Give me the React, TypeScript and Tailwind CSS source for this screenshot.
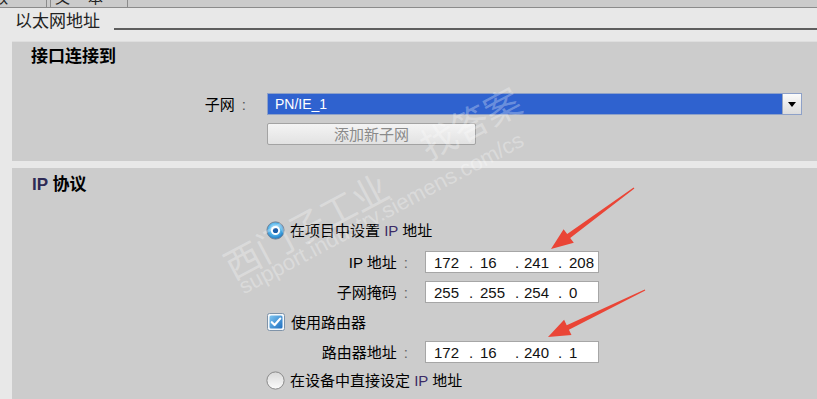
import React from "react";

type Octets = [string, string, string, string];

function RadioOn() {
  return (
    <svg width="19" height="19" viewBox="0 0 19 19" className="shrink-0">
      <defs>
        <radialGradient id="rOn" cx="45%" cy="40%" r="60%">
          <stop offset="0%" stopColor="#e6f6ff" />
          <stop offset="55%" stopColor="#5ab8ec" />
          <stop offset="100%" stopColor="#1c79c4" />
        </radialGradient>
      </defs>
      <circle cx="9.5" cy="9.5" r="8.6" fill="url(#rOn)" stroke="#6e8297" strokeWidth="1" />
      <circle cx="9.5" cy="9.5" r="4.6" fill="#ffffff" />
      <circle cx="9.5" cy="9.5" r="2.6" fill="#1a5ea9" />
    </svg>
  );
}

function RadioOff() {
  return (
    <svg width="19" height="19" viewBox="0 0 19 19" className="shrink-0">
      <defs>
        <linearGradient id="rOff" x1="0" y1="0" x2="0" y2="1">
          <stop offset="0%" stopColor="#d9d9d9" />
          <stop offset="100%" stopColor="#fbfbfb" />
        </linearGradient>
      </defs>
      <circle cx="9.5" cy="9.5" r="8.6" fill="url(#rOff)" stroke="#8a8a8a" strokeWidth="1" />
    </svg>
  );
}

function CheckOn() {
  return (
    <svg width="18" height="18" viewBox="0 0 18 18" className="shrink-0">
      <defs>
        <linearGradient id="cOn" x1="0" y1="0" x2="1" y2="1">
          <stop offset="0%" stopColor="#7cc4f0" />
          <stop offset="100%" stopColor="#1f6fc0" />
        </linearGradient>
      </defs>
      <rect x="0.5" y="0.5" width="17" height="17" rx="2" fill="#f4f8fb" stroke="#7f93a8" />
      <rect x="2.5" y="2.5" width="13" height="13" rx="1.5" fill="url(#cOn)" />
      <path d="M4.8 9.2 L7.6 12 L13.2 5.6" fill="none" stroke="#ffffff" strokeWidth="2.2" strokeLinecap="round" strokeLinejoin="round" />
    </svg>
  );
}

function IpField({ octets }: { octets: Octets }) {
  return (
    <div className="flex h-[22px] w-[174px] items-center border border-[#a6a6a6] bg-white pl-[8px] text-[15px] leading-none text-[#111]">
      <span className="w-[32px]">{octets[0]}</span>
      <span className="w-[14px] pl-[3px]">.</span>
      <span className="w-[32px]">{octets[1]}</span>
      <span className="w-[12px] pl-[3px]">.</span>
      <span className="w-[30px]">{octets[2]}</span>
      <span className="w-[15px] pl-[4px]">.</span>
      <span>{octets[3]}</span>
    </div>
  );
}

function FieldRow({ label, octets, className }: { label: React.ReactNode; octets: Octets; className: string }) {
  return (
    <div className={"flex h-[22px] items-center " + className}>
      <div className="flex w-[413px] items-center justify-end pr-[17px] text-[15px] leading-none">
        <span>{label}</span>
        <span className="ml-[7px] text-[#666]">:</span>
      </div>
      <IpField octets={octets} />
    </div>
  );
}

const Ip = () => <span className="text-[#3a2a66]">IP</span>;

export default function App() {
  return (
    <div className="relative h-[399px] w-[817px] overflow-hidden bg-[#e8e8e8] font-['Liberation_Sans','Noto_Sans_CJK_SC',sans-serif] text-black">
      {/* tab strip */}
      <div className="flex h-[8px] overflow-hidden border-b border-[#8b8b8b] bg-[#cbcbcb] text-[15px] leading-none text-[#222]">
        <div className="w-[47px] overflow-hidden border-r border-[#8b8b8b]">
          <span className="-ml-[7px] -mt-[10px] block">数</span>
        </div>
        <div className="ml-[3px] flex w-[78px] gap-[18px] overflow-hidden border-l border-r border-[#8b8b8b] pl-[4px]">
          <span className="-mt-[10px] block">文</span>
          <span className="-mt-[10px] block">本</span>
        </div>
      </div>

      {/* header */}
      <div className="flex h-[22px] items-end pl-[15px]">
        <span className="text-[17px] leading-none text-[#222]">以太网地址</span>
        <div className="ml-[14px] h-[2px] flex-1 bg-[#5e5e5e]" />
      </div>

      {/* 接口连接到 */}
      <div className="ml-[12px] mt-[11px] h-[120px] border-t border-[#dedede] bg-[#cccccc]">
        <div className="h-[51px] pl-[19px] pt-[6px] text-[17px] font-bold leading-none">接口连接到</div>
        <div className="flex h-[22px] items-center">
          <div className="flex w-[255px] items-center justify-end pr-[21px] text-[15px] leading-none">
            <span>子网</span>
            <span className="ml-[7px] text-[#555]">:</span>
          </div>
          <div className="flex h-[22px] w-[535px] items-stretch border border-[#8ea1c8] bg-[#2f62cf]">
            <span className="flex-1 self-center pl-[7px] text-[14px] leading-none text-white">PN/IE_1</span>
            <div className="flex w-[19px] items-center justify-center border-l border-[#9aa7c0] bg-gradient-to-b from-[#fbfbfb] to-[#dcdcdc]">
              <span className="h-0 w-0 border-x-[4px] border-t-[5px] border-x-transparent border-t-black" />
            </div>
          </div>
        </div>
        <div className="mt-[8px] flex h-[22px] pl-[255px]">
          <div className="flex w-[209px] items-center justify-center rounded-[2px] border border-[#a3a3a3] bg-gradient-to-b from-[#f4f4f4] to-[#e2e2e2] text-[15px] leading-none text-[#8a8a8a]">
            添加新子网
          </div>
        </div>
      </div>

      {/* IP 协议 */}
      <div className="ml-[12px] mt-[7px] h-[231px] bg-[#cccccc]">
        <div className="h-[52px] pl-[20px] pt-[8px] text-[17px] font-bold leading-none">
          <span className="text-[#2e2a55]">IP</span> 协议
        </div>
        <div className="flex h-[20px] items-center pl-[254px] text-[15px] leading-none">
          <RadioOn />
          <span className="ml-[5px]">在项目中设置 <Ip /> 地址</span>
        </div>
        <FieldRow className="mt-[11px]" label={<>IP 地址</>} octets={["172", "16", "241", "208"]} />
        <FieldRow className="mt-[8px]" label="子网掩码" octets={["255", "255", "254", "0"]} />
        <div className="mt-[10px] flex h-[18px] items-center pl-[255px] text-[15px] leading-none">
          <CheckOn />
          <span className="ml-[6px]">使用路由器</span>
        </div>
        <FieldRow className="mt-[10px]" label="路由器地址" octets={["172", "16", "240", "1"]} />
        <div className="mt-[8px] flex h-[19px] items-center pl-[254px] text-[15px] leading-none">
          <RadioOff />
          <span className="ml-[5px]">在设备中直接设定 <Ip /> 地址</span>
        </div>
      </div>

      {/* watermark */}
      <span className="pointer-events-none absolute left-[236px] top-[250px] origin-bottom-left -rotate-[28deg] whitespace-nowrap text-[36px] leading-none text-white/30">
        西门子工业
      </span>
      <span className="pointer-events-none absolute left-[246px] top-[276px] origin-bottom-left -rotate-[28deg] whitespace-nowrap text-[22px] leading-none text-white/30">
        support.industry.siemens.com/cs
      </span>
      <span className="pointer-events-none absolute left-[432px] top-[130px] origin-bottom-left -rotate-[28deg] whitespace-nowrap text-[36px] leading-none text-white/30">
        找答案
      </span>

      {/* red arrows */}
      <svg className="pointer-events-none absolute left-0 top-0" width="817" height="399" viewBox="0 0 817 399">
        <polygon
          fill="#ea4536"
          points="634.4,188.5 570.2,238 573.8,242.8 551,249 563.6,229.2 567.2,234 633.6,187.5"
        />
        <polygon
          fill="#ea4536"
          points="645.3,290.5 568.9,329.7 571.5,335 548,337 564.1,319.8 566.7,325.2 644.7,289.5"
        />
      </svg>
    </div>
  );
}
